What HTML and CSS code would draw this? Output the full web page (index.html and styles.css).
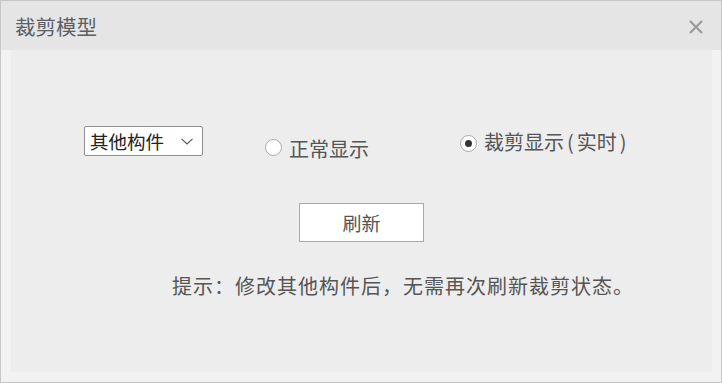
FILE: index.html
```html
<!DOCTYPE html>
<html lang="zh">
<head>
<meta charset="utf-8">
<title>裁剪模型</title>
<link rel="stylesheet" href="styles.css">
</head>
<body>
<div class="window">
  <div class="titlebar">
    <span class="title">裁剪模型</span>
    <svg class="close" width="14" height="14" viewBox="0 0 14 14"><path d="M1 1L13 13M13 1L1 13" stroke="#9a9a9a" stroke-width="2.2" fill="none"/></svg>
  </div>
  <div class="body">
    <div class="panel">
      <div class="row">
        <div class="select">
          <span class="select-text">其他构件</span>
          <svg class="chev" width="12" height="7" viewBox="0 0 12 7"><path d="M0.5 0.8L6 6L11.5 0.8" stroke="#555" stroke-width="1.1" fill="none"/></svg>
        </div>
        <label class="radio r1"><span class="circle"></span><span class="rlabel">正常显示</span></label>
        <label class="radio r2"><span class="circle checked"></span><span class="rlabel">裁剪显示<span class="paren">(</span>实时<span class="paren">)</span></span></label>
      </div>
      <div class="btnrow"><button class="btn">刷新</button></div>
      <div class="hint">提示：修改其他构件后，无需再次刷新裁剪状态。</div>
    </div>
  </div>
</div>
</body>
</html>
```
FILE: styles.css
```css
html, body { margin: 0; padding: 0; }
body {
  font-family: "Noto Sans CJK SC", "Noto Sans", sans-serif;
  color: #555;
  background: #fff;
}
.window {
  width: 722px;
  height: 383px;
  box-sizing: border-box;
  border: 1px solid #c6c6c6;
  background: #f2f2f2;
  display: flex;
  flex-direction: column;
}
.titlebar {
  height: 49px;
  background: #e5e5e5;
  display: flex;
  align-items: center;
  justify-content: space-between;
  padding: 0 18px 0 14px;
  flex-shrink: 0;
}
.title {
  font-size: 20.5px;
  line-height: 24px;
  color: #5a5e66;
  margin-top: 1px;
}
.close { margin-top: 3px; }
.body {
  flex: 1;
  padding: 0 9px 9px 10px;
}
.panel {
  height: 322px;
  background: #ededed;
  padding-top: 76px;
  box-sizing: border-box;
}
.row {
  display: flex;
  align-items: flex-start;
  height: 30px;
}
.select {
  margin-left: 73px;
  width: 119px;
  height: 30px;
  box-sizing: border-box;
  border: 1px solid #8f8f8f;
  border-radius: 2px;
  background: #fff;
  display: flex;
  align-items: center;
  justify-content: space-between;
  padding: 0 9px 0 5px;
}
.select-text {
  font-size: 18.5px;
  line-height: 22px;
  color: #222;
}
.chev { margin-top: 1px; }
.radio {
  display: flex;
  align-items: center;
  gap: 7px;
  font-size: 20px;
  line-height: 24px;
  color: #555;
  flex-shrink: 0;
}
.r1 { margin-left: 62px; margin-top: 8px; }
.r2 { margin-left: 91px; margin-top: 6px; }
.r1 .rlabel { margin-top: 3px; }
.r2 .rlabel { margin-top: -2px; }
.paren { margin: 0 3px; }
.circle {
  width: 17px;
  height: 17px;
  box-sizing: border-box;
  border: 1px solid #a8a8a8;
  border-radius: 50%;
  background: #fff;
  display: flex;
  align-items: center;
  justify-content: center;
}
.circle.checked::after {
  content: "";
  width: 7px;
  height: 7px;
  border-radius: 50%;
  background: #333;
}
.btnrow {
  margin-top: 47px;
  padding-left: 288px;
}
.btn {
  width: 125px;
  height: 39px;
  box-sizing: border-box;
  border: 1px solid #aaa;
  background: #fff;
  font-family: inherit;
  font-size: 19px;
  color: #555;
  padding: 0;
  line-height: 24px;
}
.hint {
  margin-top: 33px;
  padding-left: 161px;
  font-size: 20px;
  letter-spacing: 1px;
  line-height: 22px;
  color: #555;
}
```
